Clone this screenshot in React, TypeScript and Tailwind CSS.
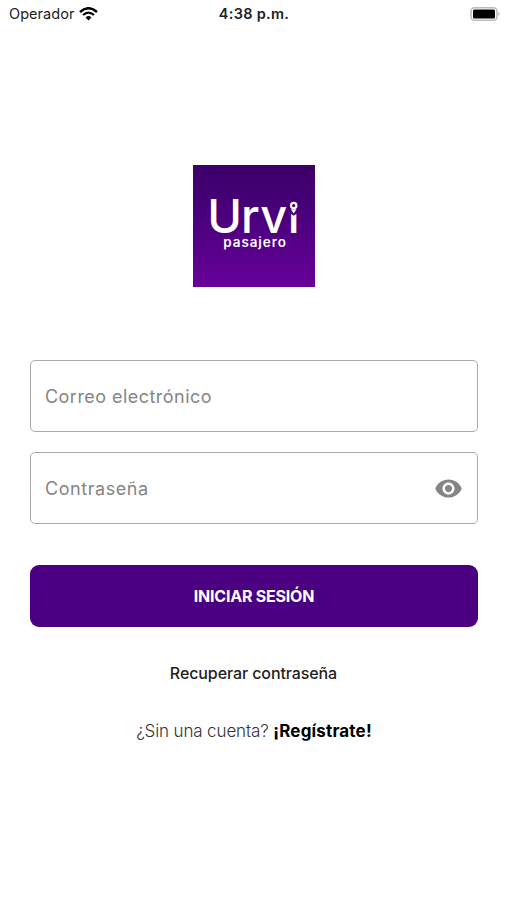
import { useState } from "react";
import { MdVisibility, MdVisibilityOff } from "react-icons/md";

export default function App() {
  return (
    <div className="w-full h-[900px] flex flex-col bg-white font-['Inter','Liberation_Sans',sans-serif] overflow-hidden">
      <StatusBar />

      <main className="flex flex-col items-center pl-[30px] pr-[29px] pt-[137px]">
        <Logo />

        <form
          className="w-full flex flex-col mt-[73px]"
          onSubmit={(e) => e.preventDefault()}
        >
          <div className="flex flex-col gap-5">
            <Field
              placeholder="Correo electrónico"
              className="tracking-[0.46px]"
            />
            <Field
              placeholder="Contraseña"
              className="tracking-[0.56px]"
              secure
            />
          </div>

          <button className="h-[62px] mt-[41px] rounded-[9px] bg-[#4b0082] text-white text-base font-bold tracking-[-0.22px]">
            INICIAR SESIÓN
          </button>
        </form>

        <a className="mt-[34px] pr-px text-base leading-6 font-medium text-[#222] tracking-[-0.1px] cursor-pointer">
          Recuperar contraseña
        </a>

        <p className="mt-[34px] text-[17px] leading-6 font-light text-[#333] tracking-[-0.13px]">
          ¿Sin una cuenta?{" "}
          <a className="font-bold text-black tracking-[0.18px] cursor-pointer">
            ¡Regístrate!
          </a>
        </p>
      </main>
    </div>
  );
}

const StatusBar = () => (
  <div className="h-7 shrink-0 grid grid-cols-3 items-center pl-[9px] pr-[6px] text-[#222]">
    <div className="flex items-center gap-[5px] text-[14.5px] tracking-[0.05px]">
      Operador
      <WifiIcon />
    </div>
    <span className="-ml-[2px] text-center text-[14.5px] font-semibold tracking-[0.3px]">
      4:38 p.m.
    </span>
    <div className="flex justify-end">
      <BatteryIcon />
    </div>
  </div>
);

type FieldProps = {
  placeholder: string;
  className: string;
  secure?: boolean;
};

const Field = ({ placeholder, className, secure }: FieldProps) => {
  const [hidden, setHidden] = useState(true);

  return (
    <label className="h-[72px] flex items-center justify-between px-[14px] border-[1.5px] border-[#aaa] rounded-[5px]">
      <input
        type={secure && hidden ? "password" : "text"}
        placeholder={placeholder}
        className={`flex-1 min-w-0 pt-[2px] outline-none text-lg placeholder:text-[#858585] ${className}`}
      />
      {secure && (
        <button type="button" onClick={() => setHidden((h) => !h)}>
          {hidden ? (
            <MdVisibility className="size-[29px] text-[#858585]" />
          ) : (
            <MdVisibilityOff className="size-[29px] text-[#858585]" />
          )}
        </button>
      )}
    </label>
  );
};

const Logo = () => (
  <svg width="122" height="122" viewBox="0 0 122 122">
    <defs>
      <linearGradient
        id="logo-bg"
        gradientUnits="userSpaceOnUse"
        x1="0"
        y1="0"
        x2="0"
        y2="122"
      >
        <stop offset="0" stopColor="#3d0069" />
        <stop offset="0.35" stopColor="#460078" />
        <stop offset="1" stopColor="#680099" />
      </linearGradient>
    </defs>
    <rect width="122" height="122" fill="url(#logo-bg)" />
    <text
      x="14.2 48 67.2 94.7"
      y="68"
      fill="#fff"
      className="font-['Inter',sans-serif] text-[47px] font-medium"
    >
      Urvi
    </text>
    {/* the pin takes the place of the dot on the i */}
    <path d="M94 30H108V48.4H103.9L100.7 50.8L97.5 48.4H94Z" fill="url(#logo-bg)" />
    <path d="M97.8 44.2L100.7 48.4L103.6 44.2Z" fill="#fff" />
    <circle
      cx="100.7"
      cy="40.6"
      r="2.7"
      fill="#460078"
      stroke="#fff"
      strokeWidth="2.1"
    />
    <text
      x="30.3"
      y="82.2"
      fill="#fff"
      textLength="63.5"
      lengthAdjust="spacingAndGlyphs"
      className="font-['Inter',sans-serif] text-[13px] font-semibold tracking-[0.9px]"
    >
      pasajero
    </text>
  </svg>
);

const WifiIcon = () => (
  <svg width="19" height="14" viewBox="0 0 19 14" fill="none" stroke="#000">
    <path d="M1 5Q9.5 -2.6 18 5" strokeWidth="2.4" />
    <path d="M4 8Q9.5 3.2 15 8" strokeWidth="2.3" />
    <path d="M6.6 10.4Q9.5 7.6 12.4 10.4L9.5 13.4Z" fill="#000" stroke="none" />
  </svg>
);

const BatteryIcon = () => (
  <svg width="31" height="15" viewBox="0 0 31 15">
    <rect x="1" y="0.8" width="26" height="12.4" rx="3.5" fill="#fff" stroke="#bbb" strokeWidth="1.6" />
    <rect x="3" y="2.5" width="22" height="9" rx="1.5" fill="#000" />
    <path d="M28.5 4.8Q31 7 28.5 9.2Z" fill="#bbb" />
  </svg>
);
